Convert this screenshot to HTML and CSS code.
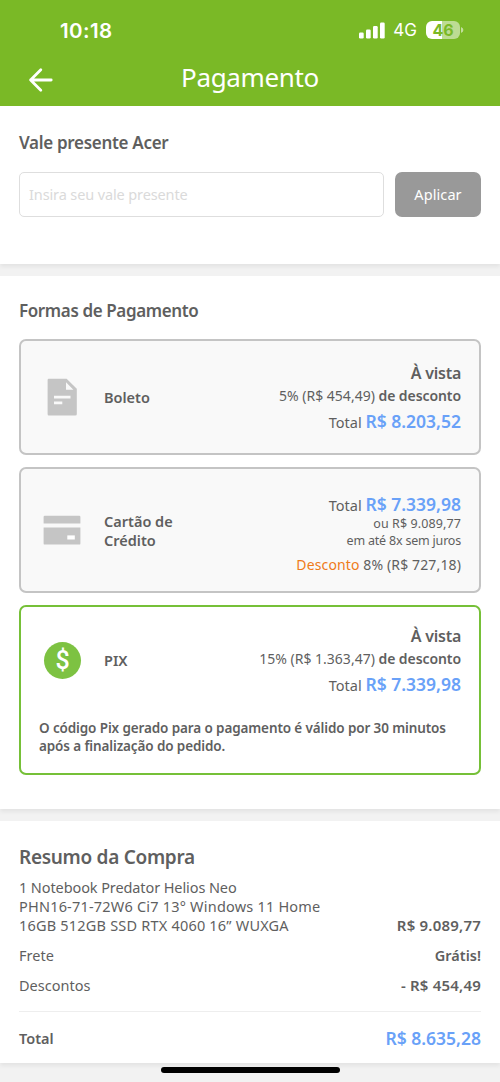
FILE: index.html
```html
<!DOCTYPE html>
<html lang="pt-BR">
  <head>
    <meta charset="UTF-8" />
    <meta name="viewport" content="width=device-width, initial-scale=1.0" />
    <title>Pagamento</title>
    <link rel="stylesheet" href="styles.css">
  </head>
  <body>
    <header class="header">
      <div class="status">
        <span class="time">10:18</span>
        <div class="status-right">
          <svg class="signal" width="26" height="17" viewBox="0 0 26 17" fill="#fff">
            <rect x="0" y="10.5" width="4.7" height="6" rx="1.2" />
            <rect x="7" y="7.5" width="4.7" height="9" rx="1.2" />
            <rect x="14" y="4" width="4.7" height="12.5" rx="1.2" />
            <rect x="21" y="0.5" width="4.7" height="16" rx="1.2" />
          </svg>
          <span class="network">4G</span>
          <div class="battery"><span class="level">46</span></div>
          <svg class="battery-tip" width="3" height="6" viewBox="0 0 3 6"><path d="M0 0Q2.4 1 2.4 3T0 6Z" fill="#fff" opacity=".55" /></svg>
        </div>
      </div>
      <div class="nav">
        <svg class="back" width="26" height="26" viewBox="0 0 26 26" fill="none" stroke="#fff" stroke-width="2.8" stroke-linecap="round" stroke-linejoin="round">
          <path d="M23.2 13H2.6M12.8 2.8L2.6 13L12.8 23.2" />
        </svg>
        <h1>Pagamento</h1>
      </div>
    </header>

    <!-- Vale presente -->
    <section class="section voucher">
      <h2>Vale presente Acer</h2>
      <form class="voucher-form">
        <input type="text" placeholder="Insira seu vale presente" />
        <button type="button">Aplicar</button>
      </form>
    </section>

    <!-- Formas de pagamento -->
    <section class="section payment">
      <h2>Formas de Pagamento</h2>
      <div class="card boleto">
        <div class="card-row">
          <svg class="icon" width="38" height="38" viewBox="0 0 38 38">
            <path d="M5.6 .7H23.6L33.8 10.8V35.9Q33.8 37.4 32.3 37.4H5.6Q4.6 37.4 4.6 36.2V1.9Q4.6 .7 5.6 .7Z" fill="#c5c5c5" />
            <path d="M23 4.2V11.7H30.4ZM11 17.8H27.5V20.6H11ZM11 23.5H19.3V26.3H11Z" fill="#f9f9f9" />
          </svg>
          <span class="name">Boleto</span>
          <div class="prices">
            <p class="cash">À vista</p>
            <p class="off">5% (R$ 454,49) <b>de desconto</b></p>
            <p class="total">Total <b>R$ 8.203,52</b></p>
          </div>
        </div>
      </div>
      <div class="card credit">
        <div class="card-row">
          <svg class="icon" width="38" height="38" viewBox="0 0 38 38">
            <path d="M1.8 4.7H36.2Q37.4 4.7 37.4 5.9V12.5H.6V5.9Q.6 4.7 1.8 4.7ZM.6 16.5H37.4V32.4Q37.4 33.6 36.2 33.6H1.8Q.6 33.6 .6 32.4Z" fill="#c5c5c5" />
            <path d="M24.3 24.4H31.8V28.5H24.3Z" fill="#fff" />
          </svg>
          <span class="name">Cartão de<br />Crédito</span>
          <div class="prices">
            <p class="total">Total <b>R$ 7.339,98</b></p>
            <p class="small">ou R$ 9.089,77</p>
            <p class="small installments">em até 8x sem juros</p>
            <p class="discount"><span>Desconto</span> 8% (R$ 727,18)</p>
          </div>
        </div>
      </div>
      <div class="card pix active">
        <div class="card-row">
          <span class="icon coin">$</span>
          <span class="name">PIX</span>
          <div class="prices">
            <p class="cash">À vista</p>
            <p class="off">15% (R$ 1.363,47) <b>de desconto</b></p>
            <p class="total">Total <b>R$ 7.339,98</b></p>
          </div>
        </div>
        <p class="note">O código Pix gerado para o pagamento é válido por 30 minutos<br />após a finalização do pedido.</p>
      </div>
    </section>

    <!-- Resumo -->
    <section class="section summary">
      <h2>Resumo da Compra</h2>
      <div class="line product">
        <span>1 Notebook Predator Helios Neo<br />PHN16-71-72W6 Ci7 13° Windows 11 Home<br />16GB 512GB SSD RTX 4060 16” WUXGA</span>
        <b class="value">R$ 9.089,77</b>
      </div>
      <div class="line"><span>Frete</span><b>Grátis!</b></div>
      <div class="line"><span>Descontos</span><b class="value">- R$ 454,49</b></div>
      <div class="line final"><b>Total</b><b class="amount">R$ 8.635,28</b></div>
    </section>

    <div class="home-bar"></div>
  </body>
</html>
```
FILE: styles.css
```css
* {
  margin: 0;
  padding: 0;
  box-sizing: border-box;
}

body {
  width: 500px;
  height: 1082px;
  overflow: hidden;
  display: flex;
  flex-direction: column;
  background-color: #f2f2f2;
  color: #5f5f5f;
  font-family: "Noto Sans", "Open Sans", sans-serif;
  font-size: 14.5px;
}

b {
  font-weight: 600;
}

/* header */
.header {
  height: 106px;
  flex: none;
  background-color: #7ab926;
  color: #fff;
}
.status {
  height: 52px;
  padding: 8px 36px 0 60px;
  display: flex;
  justify-content: space-between;
  align-items: center;
  font-family: Inter, sans-serif;
}
.time {
  font-size: 20.5px;
  font-weight: 600;
  letter-spacing: 0.4px;
}
.status-right {
  display: flex;
  align-items: center;
}
.network {
  margin: 0 9px 0 8px;
  font-size: 17px;
}
.battery {
  width: 34px;
  height: 18px;
  border-radius: 6px;
  background: linear-gradient(to right, #fff 47%, #bddc93 47%);
  text-align: center;
}
.level {
  display: block;
  line-height: 18px;
  font-size: 16px;
  font-weight: 700;
  color: #7ab926;
}
.battery-tip {
  margin-left: 1px;
}
.nav {
  height: 54px;
  padding: 2px 28px 0;
  display: grid;
  grid-template-columns: 26px 1fr 26px;
  align-items: center;
}
h1 {
  padding-bottom: 6px;
  font-size: 26px;
  font-weight: 400;
  line-height: 46px;
  letter-spacing: -0.35px;
  text-align: center;
}

/* sections */
.section {
  flex: none;
  margin-bottom: 12px;
  padding: 0 19px;
  background-color: #fff;
  box-shadow: 0 3px 4px rgba(0, 0, 0, 0.06);
}
h2 {
  font-size: 17px;
  font-weight: 600;
  line-height: 24px;
  letter-spacing: -0.3px;
}

.voucher {
  height: 158px;
  padding-top: 25px;
}
.voucher-form {
  margin-top: 17px;
  display: flex;
  justify-content: space-between;
}
.voucher-form input {
  width: 365px;
  height: 45px;
  padding: 0 9px 2px;
  border: 1px solid #dedede;
  border-radius: 5px;
  font: inherit;
  letter-spacing: -0.12px;
}
.voucher-form input::placeholder {
  color: #dadada;
}
.voucher-form button {
  width: 86px;
  height: 45px;
  padding-bottom: 2px;
  border: none;
  border-radius: 7px;
  background-color: #999;
  color: #fff;
  font: inherit;
  letter-spacing: 0.1px;
}

/* payment cards */
.payment {
  height: 533px;
  padding-top: 23px;
}
.payment h2 {
  margin-bottom: 16px;
  letter-spacing: -0.38px;
}
.card {
  margin-bottom: 12px;
  border: 2px solid #c4c4c4;
  border-radius: 7px;
  background-color: #f9f9f9;
}
.card-row {
  height: 112px;
  padding: 0 18px 0 22px;
  display: flex;
  align-items: center;
}
.icon {
  flex: none;
  width: 38px;
  height: 38px;
  margin-right: 23px;
}
.name {
  font-weight: 600;
  line-height: 19px;
}
.prices {
  margin-left: auto;
  padding-top: 4px;
  text-align: right;
}
.cash {
  font-size: 16px;
  font-weight: 600;
  line-height: 24px;
  letter-spacing: -0.25px;
}
.off {
  font-size: 14px;
  line-height: 22px;
}
.off b {
  letter-spacing: -0.08px;
}
.total {
  font-size: 14.5px;
  line-height: 29px;
}
.total b {
  font-size: 17.5px;
  color: #69a1f8;
}
.credit .card-row {
  height: 122px;
}
.credit .name {
  padding-top: 1px;
}
.credit .prices {
  padding-top: 13px;
}
.credit .total {
  line-height: 22px;
}
.small {
  font-size: 12.5px;
  line-height: 16.5px;
  letter-spacing: 0.1px;
}
.installments {
  letter-spacing: -0.2px;
}
.discount {
  font-size: 14px;
  line-height: 31px;
  letter-spacing: 0.13px;
}
.discount span {
  color: #ef7b1a;
}
.active {
  border-color: #76c038;
  background-color: #fff;
}
.pix .card-row {
  height: 106px;
}
.pix .prices {
  padding-top: 4px;
}
.coin {
  width: 37px;
  height: 37px;
  margin-left: 1px;
  border-radius: 50%;
  background-color: #7dc242;
  color: #fff;
  font-family: Roboto, sans-serif;
  font-size: 25px;
  font-weight: 500;
  line-height: 37px;
  text-align: center;
}
.note {
  padding: 7px 18px 18px;
  font-size: 13.5px;
  font-weight: 600;
  line-height: 17.5px;
  letter-spacing: -0.12px;
}

/* summary */
.summary {
  height: 242px;
  margin-bottom: 0;
  padding-top: 24px;
}
.summary h2 {
  font-size: 19px;
  letter-spacing: -0.3px;
}
.line {
  display: flex;
  justify-content: space-between;
  align-items: flex-end;
  line-height: 30px;
}
.product {
  margin: 9px 0 4px;
  line-height: 19.2px;
}
.product span {
  letter-spacing: 0.2px;
  white-space: nowrap;
}
.product span::first-line {
  letter-spacing: -0.1px;
}
.value {
  font-size: 15px;
  letter-spacing: 0.2px;
}
.final {
  margin-top: 11px;
  padding-top: 9px;
  border-top: 1px solid #eee;
}
.amount {
  padding-top: 2px;
  font-size: 17.5px;
  color: #69a1f8;
}

.home-bar {
  flex: none;
  width: 179px;
  height: 6px;
  margin: 4px auto 0;
  border-radius: 3px;
  background-color: #000;
}
```
